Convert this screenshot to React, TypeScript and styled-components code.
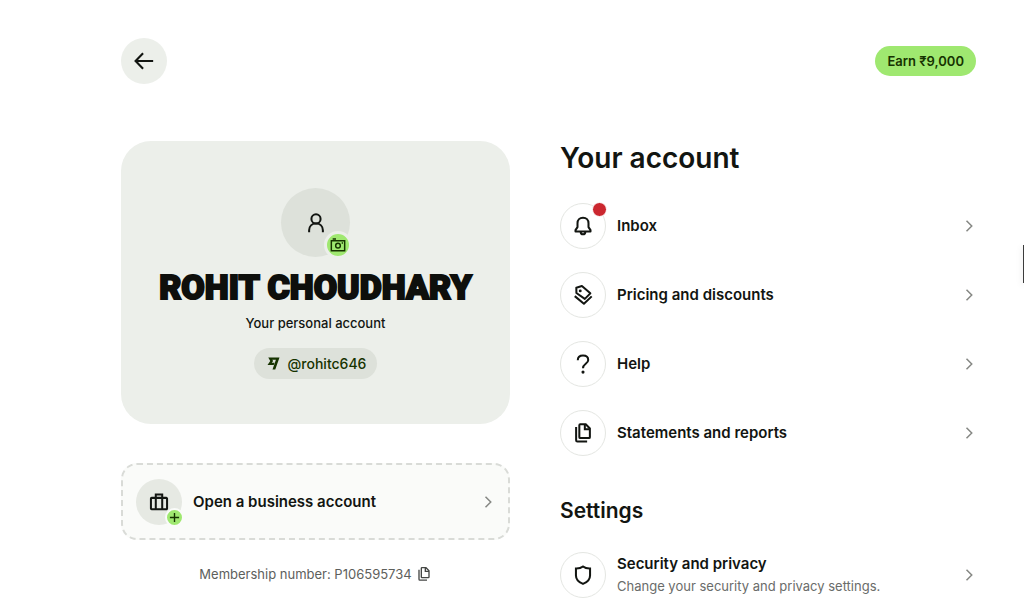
import React from "react";
import styled, { createGlobalStyle } from "styled-components";

const Global = createGlobalStyle`
  *, *::before, *::after { box-sizing: border-box; }
  html { scrollbar-width: none; }
  body {
    margin: 0;
    background: #ffffff;
    color: #121511;
    font-family: Inter, "Liberation Sans", sans-serif;
    font-size: 15px;
    line-height: 22px;
  }
  h1, h2, h3, p, ul { margin: 0; padding: 0; }
  ul { list-style: none; }
  button { border: 0; padding: 0; font: inherit; color: inherit; cursor: pointer; }
  a { color: inherit; text-decoration: none; }
  svg { display: block; flex: none; }
`;

const Page = styled.div`
  padding: 38px 48px 0 121px;
`;

const TopBar = styled.header`
  display: flex;
  align-items: center;
  justify-content: space-between;
  margin-bottom: 57px;
`;

const BackButton = styled.button`
  display: grid;
  place-items: center;
  width: 46px;
  height: 46px;
  border-radius: 50%;
  background: #ecefea;
`;

const EarnButton = styled.button`
  height: 30px;
  padding: 0 12px;
  border-radius: 15px;
  background: #9fe870;
  color: #163300;
  font-size: 13px;
  font-weight: 600;
`;

const Columns = styled.main`
  display: grid;
  grid-template-columns: minmax(0, 389fr) minmax(0, 416fr);
  column-gap: 50px;
  align-items: start;
`;

const ProfileColumn = styled.section`
  display: flex;
  flex-direction: column;
  align-items: stretch;
`;

const ProfileCard = styled.div`
  display: flex;
  flex-direction: column;
  align-items: center;
  padding: 47px 24px 45px;
  border-radius: 30px;
  background: #ecefea;
`;

const Avatar = styled.div<{ $size: number }>`
  position: relative;
  display: grid;
  place-items: center;
  flex: none;
  width: ${(p) => p.$size}px;
  height: ${(p) => p.$size}px;
  border-radius: 50%;
  background: ${(p) => (p.$size > 50 ? "#dde1da" : "#e6e9e3")};
`;

const PhotoButton = styled.button`
  position: absolute;
  right: -2px;
  bottom: -2px;
  display: grid;
  place-items: center;
  width: 28px;
  height: 28px;
  border: 3px solid #ecefea;
  border-radius: 50%;
  background: #9fe870;
`;

const PlusBadge = styled.span`
  position: absolute;
  right: -2px;
  bottom: -2px;
  display: grid;
  place-items: center;
  width: 19px;
  height: 19px;
  border: 2px solid #fafbf9;
  border-radius: 50%;
  background: #9fe870;
`;

const Name = styled.h1`
  margin-top: 10px;
  color: #0e0f0c;
  font-family: Roboto, "Liberation Sans", sans-serif;
  font-size: 34px;
  font-weight: 900;
  line-height: 40px;
  text-transform: uppercase;
  white-space: nowrap;
  -webkit-text-stroke: 2px #0e0f0c;
`;

const AccountType = styled.p`
  margin-top: 5px;
  font-size: 13px;
  font-weight: 500;
`;

const TagButton = styled.button`
  display: flex;
  align-items: center;
  gap: 8px;
  height: 31px;
  margin-top: 14px;
  padding: 0 11px 0 13px;
  border-radius: 16px;
  background: #dde1da;
  color: #163300;
  font-size: 14px;
  font-weight: 500;
`;

const BusinessLink = styled.a`
  display: flex;
  align-items: center;
  gap: 11px;
  height: 77px;
  margin-top: 39px;
  padding: 0 14px 0 13px;
  border: 2px dashed #d9dbd7;
  border-radius: 16px;
  background: #fafbf9;
`;

const RowTitle = styled.span`
  font-size: 15px;
  font-weight: 600;
`;

const RowNote = styled.span`
  color: #6a6c6a;
  font-size: 13px;
`;

const RowText = styled.span`
  display: flex;
  flex: 1;
  flex-direction: column;
`;

const Membership = styled.p`
  display: flex;
  align-items: center;
  justify-content: center;
  gap: 4px;
  margin-top: 23px;
  color: #5d605c;
  font-size: 13px;
`;

const CopyButton = styled.button`
  background: none;
`;

const Heading = styled.h2`
  font-size: 28px;
  font-weight: 600;
  line-height: 34px;
`;

const SubHeading = styled.h3`
  margin-top: 42px;
  font-size: 21px;
  font-weight: 600;
  line-height: 26px;
`;

const Rows = styled.ul`
  display: flex;
  flex-direction: column;
  gap: 23px;
  margin-top: 28px;
`;

const RowLink = styled.a`
  display: flex;
  align-items: center;
  gap: 11px;
  padding-right: 1px;
`;

const RowIcon = styled.span`
  position: relative;
  display: grid;
  place-items: center;
  flex: none;
  width: 46px;
  height: 46px;
  border: 1px solid #e4e6e2;
  border-radius: 50%;
`;

const UnreadDot = styled.span`
  position: absolute;
  top: -2px;
  right: -2px;
  width: 15px;
  height: 15px;
  border: 1px solid #ffffff;
  border-radius: 50%;
  background: #cb272f;
`;

const SideHandle = styled.div`
  position: fixed;
  top: 245px;
  right: 0;
  width: 1px;
  height: 38px;
  background: #3c3c3c;
  box-shadow: 0 2px 6px rgba(0, 0, 0, 0.25);
`;

type IconProps = {
  size?: number;
  weight?: number;
  color?: string;
  children: React.ReactNode;
};

const Icon = ({ size = 22, weight = 2.2, color = "#121511", children }: IconProps) => (
  <svg
    width={size}
    height={size}
    viewBox="0 0 24 24"
    fill="none"
    stroke={color}
    strokeWidth={weight}
    aria-hidden="true"
  >
    {children}
  </svg>
);

const Chevron = () => (
  <Icon size={12} weight={3} color="#868884">
    <path d="M7 1.5 17.5 12 7 22.5" />
  </Icon>
);

const Documents = ({ size, weight, color }: { size?: number; weight?: number; color?: string }) => (
  <Icon size={size} weight={weight} color={color}>
    <path d="M9 2.500h6L19.500 7V16.500a1 1 0 0 1-1 1H9a1 1 0 0 1-1-1V3.500a1 1 0 0 1 1-1Z" />
    <path d="M14 2.500v5.500H19.500" />
    <path d="M4.500 5.500V20a1.300 1.300 0 0 0 1.300 1.300H16.500" />
  </Icon>
);

const Bell = () => (
  <Icon>
    <path d="M12 3c-3.600 0-6 2.500-6 6v4.200L3.800 16.500v1.500h16.400V16.500L18 13.200V9c0-3.500-2.400-6-6-6Z" strokeLinejoin="round" />
    <path d="M9.500 18.500c0 1.700 1 2.600 2.500 2.600s2.500-.9 2.500-2.600" />
  </Icon>
);

const Tags = () => (
  <Icon>
    <path d="M4.700 4 10.800 2.200 20 10.200 14 16.200 4.800 9.800Z" strokeLinejoin="round" />
    <circle cx="9" cy="7.500" r="1.600" fill="#121511" stroke="none" />
    <path d="M3 13.200 13 21.500 21.500 13.500" strokeLinejoin="round" />
  </Icon>
);

const Question = () => (
  <Icon>
    <path d="M6.300 7.800C6.300 4.400 8.700 2.600 12 2.600s5.700 1.800 5.700 4.900c0 4.200-5.700 4.300-5.700 9" />
    <circle cx="12" cy="20.800" r="1.700" fill="#121511" stroke="none" />
  </Icon>
);

const Shield = () => (
  <Icon>
    <path d="M12 2.800c2 1.600 4.600 2.300 7.700 2.200v7.500c0 4-2.700 7.200-7.700 9.200-5-2-7.700-5.200-7.700-9.200V5c3.100.1 5.700-.6 7.700-2.200Z" />
  </Icon>
);

const accountItems = [
  { label: "Inbox", icon: <Bell />, unread: true },
  { label: "Pricing and discounts", icon: <Tags /> },
  { label: "Help", icon: <Question /> },
  { label: "Statements and reports", icon: <Documents /> },
];

const settingsItems = [
  {
    label: "Security and privacy",
    note: "Change your security and privacy settings.",
    icon: <Shield />,
  },
];

type Item = { label: string; note?: string; icon: React.ReactNode; unread?: boolean };

const MenuRows = ({ items }: { items: Item[] }) => (
  <Rows>
    {items.map((item) => (
      <li key={item.label}>
        <RowLink href="#">
          <RowIcon>
            {item.icon}
            {item.unread && <UnreadDot />}
          </RowIcon>
          <RowText>
            <RowTitle>{item.label}</RowTitle>
            {item.note && <RowNote>{item.note}</RowNote>}
          </RowText>
          <Chevron />
        </RowLink>
      </li>
    ))}
  </Rows>
);

export default function App() {
  return (
    <>
      <Global />
      <Page>
        <TopBar>
          <BackButton aria-label="Back">
            <Icon weight={2.3}>
              <path d="M22 12H3M11 3.500 2.800 12 11 20.500" />
            </Icon>
          </BackButton>
          <EarnButton>Earn ₹9,000</EarnButton>
        </TopBar>
        <Columns>
          <ProfileColumn>
            <ProfileCard>
              <Avatar $size={69}>
                <Icon>
                  <circle cx="12" cy="7.500" r="5" />
                  <path d="M4.500 22v-2c0-4.500 3-7.500 7.500-7.500s7.500 3 7.500 7.500v2" />
                </Icon>
                <PhotoButton aria-label="Change photo">
                  <Icon size={16} color="#163300">
                    <path d="M2 5.500h20v15H2ZM4 3h5" />
                    <circle cx="12" cy="13" r="3.500" />
                    <path d="M17.500 9h2" />
                  </Icon>
                </PhotoButton>
              </Avatar>
              <Name>Rohit Choudhary</Name>
              <AccountType>Your personal account</AccountType>
              <TagButton>
                <svg width="13" height="13" viewBox="0 0 24 26" fill="#163300" aria-hidden="true">
                  <path d="M5.500 8.200 0 15.800h12.400l1.500-4.300H8.500l2.700-3.300L9.500 5.500h7.300L10 25h5.500L24 1H1.500Z" />
                </svg>
                @rohitc646
              </TagButton>
            </ProfileCard>
            <BusinessLink href="#">
              <Avatar $size={46}>
                <Icon>
                  <path d="M4 7.500h16a.8.8 0 0 1 .8.8v10.900a.8.8 0 0 1-.8.8h-16a.8.8 0 0 1-.8-.8V8.300a.8.8 0 0 1 .8-.8ZM8.500 20V3.800h7V20" />
                </Icon>
                <PlusBadge>
                  <Icon size={11} color="#163300" weight={3}>
                    <path d="M12 2v20M2 12h20" />
                  </Icon>
                </PlusBadge>
              </Avatar>
              <RowText>
                <RowTitle>Open a business account</RowTitle>
              </RowText>
              <Chevron />
            </BusinessLink>
            <Membership>
              Membership number: P106595734
              <CopyButton aria-label="Copy membership number">
                <Documents size={16} weight={2} color="#454745" />
              </CopyButton>
            </Membership>
          </ProfileColumn>
          <section>
            <Heading>Your account</Heading>
            <MenuRows items={accountItems} />
            <SubHeading>Settings</SubHeading>
            <MenuRows items={settingsItems} />
          </section>
        </Columns>
      </Page>
      <SideHandle />
    </>
  );
}
